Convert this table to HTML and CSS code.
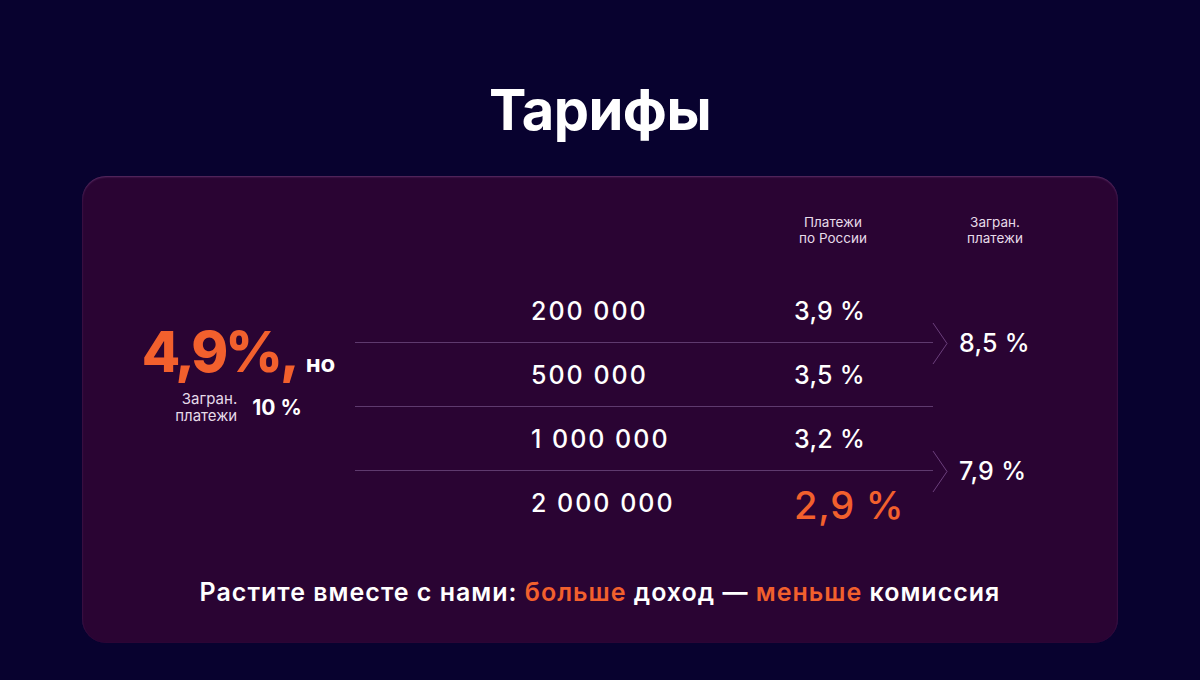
FILE: index.html
```html
<!DOCTYPE html>
<html lang="ru">
<head>
<meta charset="utf-8">
<title>Тарифы</title>
<link rel="stylesheet" href="styles.css">
</head>
<body>
<section class="tariffs">
  <h1 class="title">Тарифы</h1>
  <div class="card">
    <div class="head">
      <div class="head-ru">Платежи<br>по России</div>
      <div class="head-ext">Загран.<br>платежи</div>
    </div>
    <div class="main">
      <div class="base">
        <div class="base-top"><span class="base-rate">4,9%,</span><span class="base-but">но</span></div>
        <div class="base-sub"><span class="base-sub-label">Загран.<br>платежи</span><span class="base-sub-val">10 %</span></div>
      </div>
      <div class="table">
        <div class="rows">
          <div class="row"><span class="amt">200 000</span><span class="pct">3,9 %</span></div>
          <div class="row"><span class="amt">500 000</span><span class="pct">3,5 %</span></div>
          <div class="row"><span class="amt">1 000 000</span><span class="pct">3,2 %</span></div>
          <div class="row"><span class="amt">2 000 000</span><span class="pct pct-best">2,9 %</span></div>
        </div>
        <div class="ext">
          <div class="ext-cell">
            <svg class="chev" width="17" height="43" viewBox="0 0 17 43"><path d="M1 1 L15 21.5 L1 42" fill="none" stroke="#6b3f7c" stroke-width="1"/></svg>
            <span class="ext-val">8,5 %</span>
          </div>
          <div class="ext-cell">
            <svg class="chev" width="17" height="43" viewBox="0 0 17 43"><path d="M1 1 L15 21.5 L1 42" fill="none" stroke="#6b3f7c" stroke-width="1"/></svg>
            <span class="ext-val">7,9 %</span>
          </div>
        </div>
      </div>
    </div>
    <p class="slogan">Растите вместе с нами: <span class="accent">больше</span> доход — <span class="accent">меньше</span> комиссия</p>
  </div>
</section>
</body>
</html>
```

FILE: styles.css
```css
* { box-sizing: border-box; }
html, body { margin: 0; padding: 0; }
body {
  background: #08022f;
  color: #ffffff;
  font-family: "Inter", "Noto Sans", sans-serif;
  width: 1200px;
  height: 680px;
  overflow: hidden;
}
.tariffs {
  display: flex;
  flex-direction: column;
  align-items: center;
  padding-top: 72px;
}
.title {
  margin: 0;
  font-size: 56px;
  font-weight: 700;
  line-height: 76px;
  letter-spacing: -0.5px;
}
.card {
  margin-top: 28px;
  width: 1036px;
  height: 467px;
  background: #2a0433;
  border-radius: 24px;
  box-shadow: inset 0 1px 2px rgba(190, 130, 200, 0.35);
  padding-top: 38px;
}
.head {
  display: flex;
  padding-left: 712px;
  font-size: 13.5px;
  line-height: 16px;
  color: #e6dbe9;
  text-align: center;
}
.head-ru { width: 78px; white-space: nowrap; }
.head-ext { width: 70px; margin-left: 88px; white-space: nowrap; }
.main {
  display: flex;
  margin-top: 33px;
}
.base {
  width: 273px;
  padding-left: 40px;
  padding-top: 44px;
  display: flex;
  flex-direction: column;
  align-items: center;
}
.base-top {
  display: flex;
  align-items: baseline;
}
.base-rate {
  color: #f2602d;
  font-size: 56px;
  font-weight: 800;
  line-height: 58px;
  letter-spacing: -3px;
}
.base-but {
  font-size: 24px;
  font-weight: 700;
  margin-left: 9px;
}
.base-sub {
  display: flex;
  align-items: center;
  margin-top: 9px;
}
.base-sub-label {
  font-size: 15px;
  line-height: 17px;
  text-align: right;
  color: #e6dbe9;
}
.base-sub-val {
  font-size: 21px;
  font-weight: 700;
  margin-left: 15px;
}
.table { display: flex; }
.rows { width: 578px; }
.row {
  height: 64px;
  display: flex;
  align-items: center;
  border-bottom: 1px solid #5e3a6e;
  padding-left: 176px;
  font-size: 25px;
  font-weight: 500;
}
.row:last-child { border-bottom: none; }
.amt { width: 263px; letter-spacing: 2px; }
.pct { letter-spacing: 0.3px; }
.pct-best {
  color: #f2602d;
  font-size: 38px;
  font-weight: 500;
  margin-top: 4px;
  letter-spacing: 0.8px;
}
.ext {
  display: flex;
  flex-direction: column;
}
.ext-cell {
  height: 128px;
  display: flex;
  align-items: center;
}
.chev { display: block; margin-left: -1px; }
.ext-val {
  margin-left: 10px;
  font-size: 25px;
  font-weight: 500;
  letter-spacing: 0.3px;
}
.slogan {
  margin: 42px 0 0;
  text-align: center;
  font-size: 25px;
  font-weight: 600;
  letter-spacing: 1px;
}
.accent { color: #f2602d; }
```
